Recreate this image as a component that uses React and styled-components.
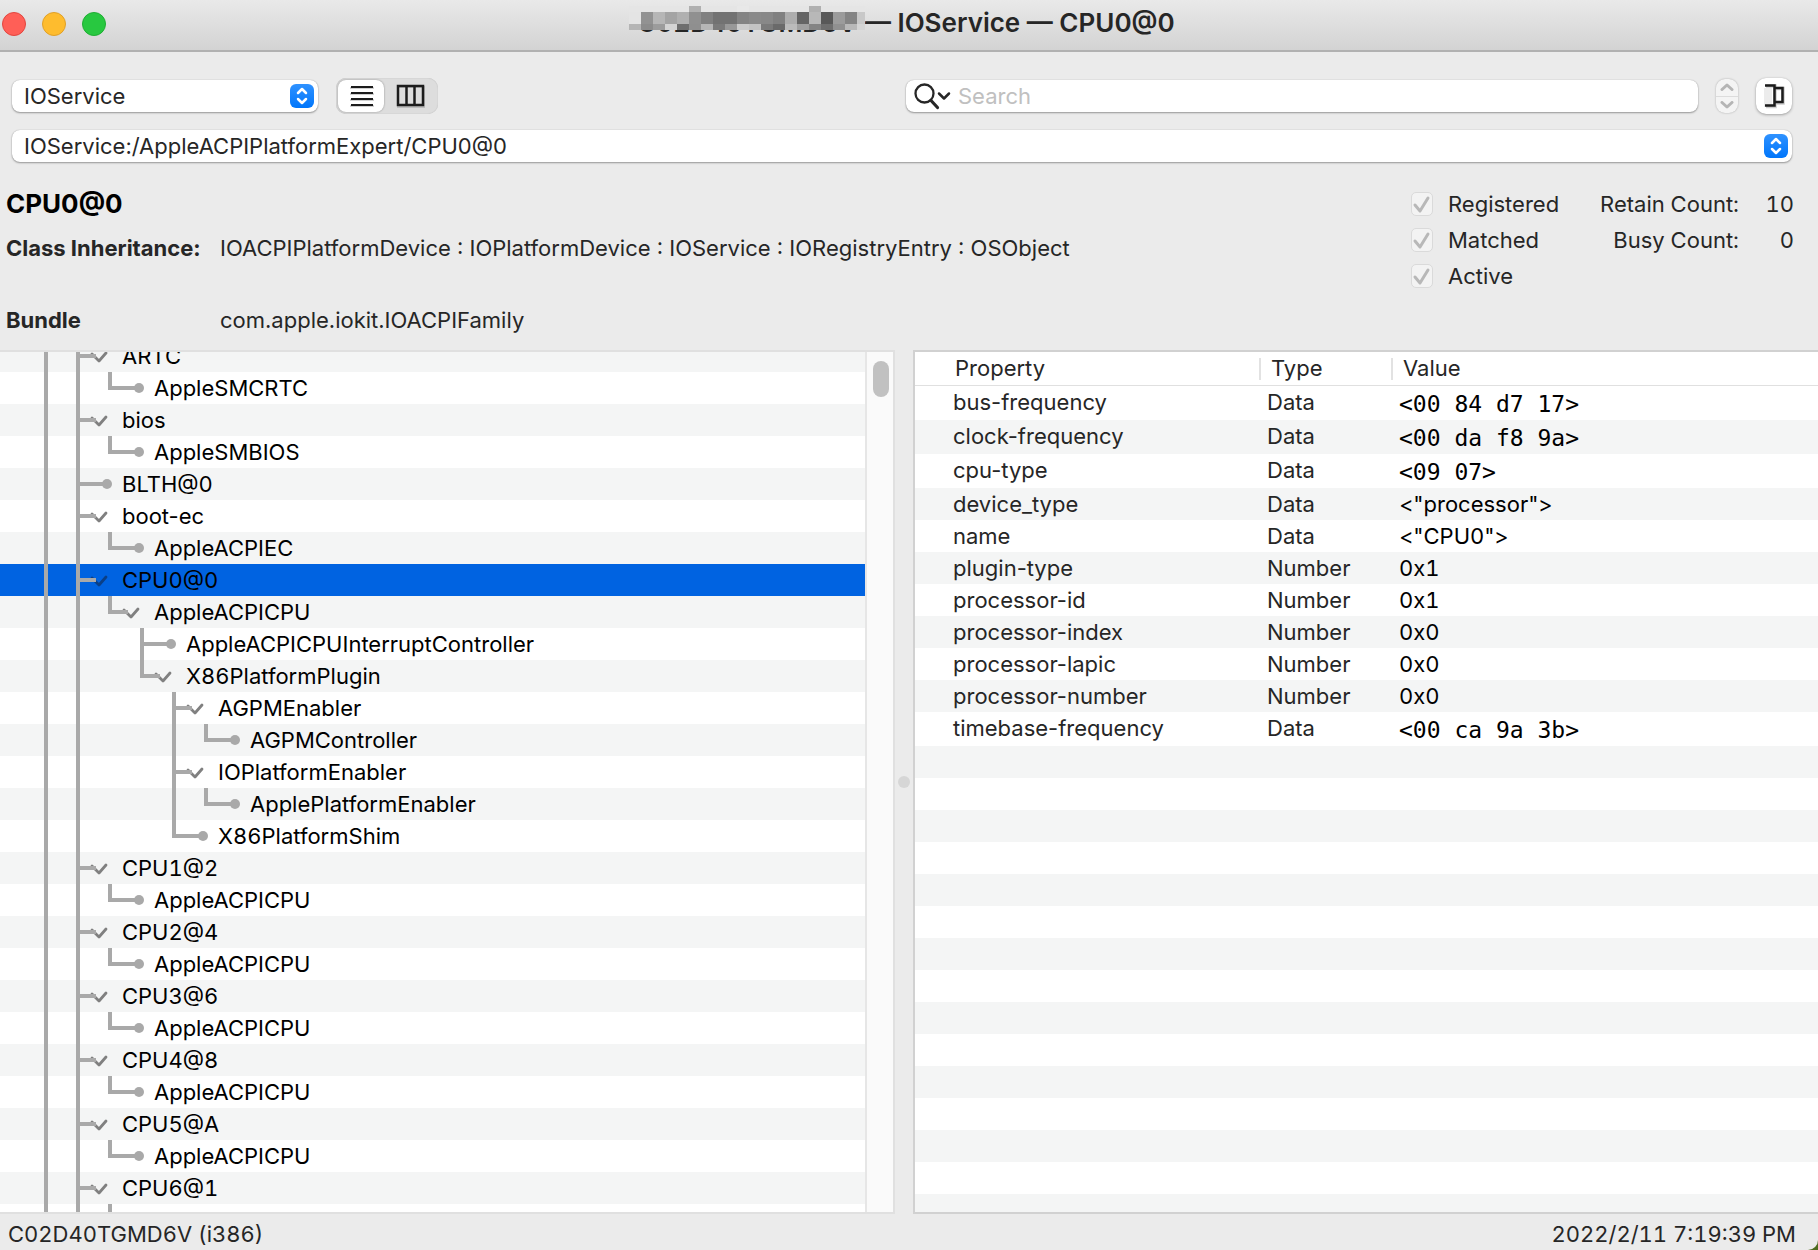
import React from "react";
import styled, { createGlobalStyle } from "styled-components";

const GlobalStyle = createGlobalStyle`
  *, *::before, *::after { box-sizing: border-box; }
  body { margin: 0; background: #4d6b1f; }
  button, input, select { font: inherit; color: inherit; margin: 0; }
`;

const Window = styled.div`
  height: 100vh;
  display: flex;
  flex-direction: column;
  overflow: hidden;
  border-bottom-right-radius: 10px;
  background: #ebebeb;
  color: #262626;
  font-family: Inter, "Liberation Sans", sans-serif;
  font-size: 22px;
  line-height: 32px;
`;

/* ---------- title bar ---------- */

const TitleBar = styled.header`
  flex: none;
  height: 52px;
  display: grid;
  grid-template-columns: 1fr auto 1fr;
  align-items: start;
  padding: 0 8px 0 2px;
  background: linear-gradient(#e9e9e9, #d3d3d3);
  border-bottom: 2px solid #b1b1b1;
`;

const Lights = styled.div`
  display: flex;
  gap: 16px;
  padding-top: 12px;
`;

const Light = styled.button`
  width: 24px;
  height: 24px;
  padding: 0;
  border: 1px solid ${(p) => p.$edge};
  border-radius: 50%;
  background: ${(p) => p.$fill};
`;

const Title = styled.div`
  display: flex;
  gap: 8px;
  font-size: 26px;
  font-weight: 600;
  line-height: 46px;
  white-space: nowrap;
`;

const Redacted = styled.span`
  position: relative;
  font-variant-numeric: tabular-nums;
`;

const Mosaic = styled.svg`
  position: absolute;
  top: 6px;
  right: -8px;
`;

/* ---------- toolbar ---------- */

const Toolbar = styled.div`
  flex: none;
  display: grid;
  grid-template-columns: minmax(0, 888fr) minmax(0, 792fr) auto;
  column-gap: 6px;
  align-items: center;
  padding: 26px 26px 0 12px;
`;

const ToolGroup = styled.div`
  display: flex;
  align-items: center;
  gap: 18px;
  padding-left: ${(p) => p.$inset || 0}px;
`;

const PathBar = styled.div`
  flex: none;
  padding: 16px 26px 0 12px;
`;

const PopUp = styled.div`
  position: relative;
  width: ${(p) => p.$width};
  height: 32px;
`;

const PopUpSelect = styled.select`
  display: block;
  width: 100%;
  height: 32px;
  padding: 0 40px 0 12px;
  appearance: none;
  border: 0;
  border-radius: 8px;
  background: #fff;
  line-height: 32px;
  box-shadow: 0 0 1px rgba(0, 0, 0, 0.3), 0 1px 2px rgba(0, 0, 0, 0.35);
`;

const Knob = styled.svg`
  position: absolute;
  top: 4px;
  right: 4px;
  pointer-events: none;
`;

const Segments = styled.div`
  display: flex;
  height: 36px;
  padding: 2px;
  border-radius: 10px;
  background: #dddddd;
  box-shadow: inset 0 0 1px rgba(0, 0, 0, 0.25);
`;

const Segment = styled.button`
  display: grid;
  place-items: center;
  width: ${(p) => (p.$on ? 46 : 52)}px;
  height: 32px;
  padding: 0;
  border: 0;
  border-radius: 8px;
  background: ${(p) => (p.$on ? "#fff" : "transparent")};
  box-shadow: ${(p) => (p.$on ? "0 0 2px rgba(0, 0, 0, 0.4)" : "none")};
`;

const SearchField = styled.label`
  display: flex;
  align-items: center;
  gap: 6px;
  height: 32px;
  padding: 0 8px;
  border-radius: 8px;
  background: #fff;
  box-shadow: 0 0 1px rgba(0, 0, 0, 0.3), 0 1px 2px rgba(0, 0, 0, 0.35);
`;

const SearchInput = styled.input`
  flex: 1;
  min-width: 0;
  height: 32px;
  padding: 0;
  border: 0;
  outline: 0;
  background: transparent;
  &::placeholder { color: #c0c0c0; opacity: 1; }
`;

const Stepper = styled.div`
  display: flex;
  flex-direction: column;
  width: 22px;
  height: 34px;
  border-radius: 9px;
  background: #f4f4f4;
  box-shadow: 0 0 2px rgba(0, 0, 0, 0.3);
`;

const StepButton = styled.button`
  flex: 1;
  display: grid;
  place-items: center;
  padding: 0;
  border: 0;
  background: transparent;
  & + & { border-top: 1px solid #dcdcdc; }
`;

const DrawerButton = styled.button`
  display: grid;
  place-items: center;
  width: 36px;
  height: 36px;
  padding: 0;
  border: 0;
  border-radius: 10px;
  background: #fff;
  box-shadow: 0 0 1px rgba(0, 0, 0, 0.2), 0 1px 3px rgba(0, 0, 0, 0.3);
`;

/* ---------- selected entry ---------- */

const Info = styled.section`
  flex: none;
  display: flex;
  justify-content: space-between;
  padding: 24px 24px 12px 6px;
  line-height: 36px;
`;

const Heading = styled.h1`
  margin: 0 0 8px;
  color: #000;
  font-size: 26px;
  font-weight: 700;
  line-height: 36px;
`;

const Facts = styled.dl`
  display: grid;
  grid-template-columns: 214px auto;
  row-gap: 36px;
  margin: 0;
  dt { font-weight: 700; white-space: nowrap; }
  dd { margin: 0; }
`;

const Status = styled.div`
  display: grid;
  grid-template-columns: 176px 152px 55px;
  grid-auto-rows: 36px;
`;

const Check = styled.label`
  grid-column: 1;
  display: grid;
  grid-template-columns: 22px auto;
  column-gap: 15px;
  align-items: center;
`;

const CheckBox = styled.input`
  grid-area: 1 / 1;
  width: 22px;
  height: 24px;
  appearance: none;
  border: 1px solid #dadada;
  border-radius: 5px;
  background: #f3f3f3;
`;

const Tick = styled.svg`
  grid-area: 1 / 1;
`;

const Count = styled.span`
  text-align: right;
  font-variant-numeric: tabular-nums;
`;

/* ---------- split view ---------- */

const Split = styled.main`
  flex: 1;
  min-height: 0;
  display: grid;
  grid-template-columns: minmax(0, 895fr) 18px minmax(0, 905fr);
`;

const TreePane = styled.section`
  display: flex;
  min-height: 0;
  border: solid #e0e0e0;
  border-width: 2px 2px 2px 0;
`;

const TreeView = styled.div`
  flex: 1;
  overflow: hidden;
  background: #fff;
`;

const TreeList = styled.ul`
  margin: -12px 0 0;
  padding: 0;
  list-style: none;
`;

const TreeRow = styled.li`
  display: flex;
  height: 32px;
  color: #000;
  font-variant-numeric: ${(p) => (p.$numbered ? "tabular-nums" : "normal")};
  white-space: nowrap;
  background: ${(p) => (p.$selected ? "#0063e1" : "#fff")};
  &:nth-child(odd) { background: ${(p) => (p.$selected ? "#0063e1" : "#f4f5f5")}; }
`;

const ScrollTrack = styled.div`
  flex: none;
  width: 28px;
  padding: 9px 4px 0 6px;
  border-left: 2px solid #e6e6e6;
  background: #fafafa;
`;

const ScrollThumb = styled.div`
  width: 16px;
  height: 36px;
  border-radius: 8px;
  background: #c1c1c1;
`;

const Divider = styled.div`
  display: grid;
  place-items: center;
`;

const Grip = styled.div`
  width: 12px;
  height: 12px;
  border-radius: 50%;
  background: #d6d6d6;
`;

const PropertyPane = styled.section`
  display: flex;
  flex-direction: column;
  min-height: 0;
  overflow: hidden;
  border: solid #d1d1d1;
  border-width: 2px 0 2px 2px;
  background: #fff;
`;

const PropertyTable = styled.table`
  flex: none;
  width: 100%;
  table-layout: fixed;
  border-collapse: separate;
  border-spacing: 0;
  th, td { padding: 0; text-align: left; vertical-align: top; font-weight: 400; }
  th { height: 34px; border-bottom: 1px solid #e0e0e0; vertical-align: middle; }
  td { padding-left: 8px; }
  td:first-child { padding-left: 38px; }
  tbody tr:nth-child(even) { background: #f4f5f5; }
`;

const ColumnLabel = styled.div`
  height: 22px;
  padding-left: ${(p) => (p.$first ? 40 : 10)}px;
  border-left: ${(p) => (p.$first ? "0" : "2px solid #e2e2e2")};
  line-height: 20px;
`;

const Col = styled.col`
  width: ${(p) => p.$width};
`;

const Value = styled.div`
  color: #000;
  font-variant-numeric: tabular-nums;
  ${(p) => p.$hex && `
    padding-top: 2px;
    font-family: "DejaVu Sans Mono", monospace;
    font-size: 23px;
    line-height: 32px;
  `}
`;

const EmptyRows = styled.div`
  flex: 1;
  background: repeating-linear-gradient(#f4f5f5 0 32px, #fff 32px 64px);
`;

const Footer = styled.footer`
  flex: none;
  display: flex;
  justify-content: space-between;
  height: 36px;
  padding: 4px 22px 0 8px;
  font-variant-numeric: tabular-nums;
`;

/* ---------- data ---------- */

const leaf = (name, level, extra) => ({ name, level, leaf: true, last: level > 0, ...extra });
const node = (name, level, extra) => ({ name, level, last: level > 0, ...extra });

const tree = [
  node("ARTC", 0),
  leaf("AppleSMCRTC", 1),
  node("bios", 0),
  leaf("AppleSMBIOS", 1),
  leaf("BLTH@0", 0),
  node("boot-ec", 0),
  leaf("AppleACPIEC", 1),
  node("CPU0@0", 0, { selected: true }),
  node("AppleACPICPU", 1),
  leaf("AppleACPICPUInterruptController", 2, { last: false }),
  node("X86PlatformPlugin", 2),
  node("AGPMEnabler", 3, { last: false }),
  leaf("AGPMController", 4, { guides: [3] }),
  node("IOPlatformEnabler", 3, { last: false }),
  leaf("ApplePlatformEnabler", 4, { guides: [3] }),
  leaf("X86PlatformShim", 3),
  node("CPU1@2", 0),
  leaf("AppleACPICPU", 1),
  node("CPU2@4", 0),
  leaf("AppleACPICPU", 1),
  node("CPU3@6", 0),
  leaf("AppleACPICPU", 1),
  node("CPU4@8", 0),
  leaf("AppleACPICPU", 1),
  node("CPU5@A", 0),
  leaf("AppleACPICPU", 1),
  node("CPU6@1", 0),
  leaf("AppleACPICPU", 1),
];

const properties = [
  ["bus-frequency", "Data", "<00 84 d7 17>", true],
  ["clock-frequency", "Data", "<00 da f8 9a>", true],
  ["cpu-type", "Data", "<09 07>", true],
  ["device_type", "Data", '<"processor">'],
  ["name", "Data", '<"CPU0">'],
  ["plugin-type", "Number", "0x1"],
  ["processor-id", "Number", "0x1"],
  ["processor-index", "Number", "0x0"],
  ["processor-lapic", "Number", "0x0"],
  ["processor-number", "Number", "0x0"],
  ["timebase-frequency", "Data", "<00 ca 9a 3b>", true],
];

/* Grey levels of the tiles hiding the host name, one list per band. */
const tiles = [
  { y: 0, h: 6, greys: [229, 229, 229, 229, 229, 176, 229, 229, 229, 232, 229, 229, 229, 229, 229, 176, 229, 229, 229, 229] },
  { y: 6, h: 12, greys: [228, 146, 182, 164, 176, 144, 128, 114, 114, 132, 138, 136, 128, 173, 100, 184, 88, 155, 132, 200] },
  { y: 18, h: 6, greys: [181, 140, 156, 212, 110, 143, 182, 122, 152, 204, 196, 122, 106, 187, 159, 132, 110, 144, 184, 212] },
];

/* ---------- drawings ---------- */

const UpDown = () => (
  <Knob width="24" height="24" viewBox="0 0 24 24" aria-hidden="true">
    <defs>
      <linearGradient id="knob" x1="0" y1="0" x2="0" y2="1">
        <stop offset="0" stopColor="#2f92ff" />
        <stop offset="1" stopColor="#0076fb" />
      </linearGradient>
    </defs>
    <rect width="24" height="24" rx="6" fill="url(#knob)" />
    <path d="M8 9l4-4 4 4M8 15l4 4 4-4" fill="none" stroke="#fff" strokeWidth="2.5" strokeLinecap="round" strokeLinejoin="round" />
  </Knob>
);

const Chevron = ({ up }) => (
  <svg width="14" height="8" viewBox="0 0 14 8" aria-hidden="true">
    <path d={up ? "M2 6.5l5-4.5 5 4.5" : "M2 1.5l5 4.5 5-4.5"} fill="none" stroke="#b5b5b5" strokeWidth="3" strokeLinecap="round" strokeLinejoin="round" />
  </svg>
);

const Branch = ({ row }) => {
  const x = 78 + 32 * row.level;
  const guides = [46, ...(row.level > 0 ? [78] : []), ...(row.guides || []).map((g) => 78 + 32 * g)];
  return (
    <svg width={x + 44} height="32" aria-hidden="true">
      {!row.leaf && (
        <path d={`M${x + 14} 14l7 7 7-8`} fill="none" stroke={row.selected ? "#0a3f86" : "#808080"} strokeWidth="2.800" strokeLinecap="round" strokeLinejoin="round" />
      )}
      <g stroke="#a9a9a9" strokeWidth="4" fill="none">
        {guides.map((g) => <path key={g} d={`M${g} 0V32`} />)}
        <path d={`M${x} 0V${row.last ? 18 : 32}M${x} 16H${x + (row.leaf ? 28 : 18)}`} />
      </g>
      {row.leaf && <circle cx={x + 29} cy="16" r="5" fill="#a9a9a9" />}
    </svg>
  );
};

export default function App() {
  return (
    <>
      <GlobalStyle />
      <Window>
        <TitleBar>
          <Lights>
            <Light aria-label="Close" $fill="#ff5f57" $edge="#e2463f" />
            <Light aria-label="Minimize" $fill="#febc2e" $edge="#e0a028" />
            <Light aria-label="Zoom" $fill="#28c840" $edge="#1fae33" />
          </Lights>
          <Title>
            <Redacted>
              C02D40TGMD6V
              <Mosaic width="236" height="24" shapeRendering="crispEdges" aria-hidden="true">
                {tiles.map((band) =>
                  band.greys.map((v, i) => (
                    <rect key={`${band.y}-${i}`} x={i * 12} y={band.y} width="12" height={band.h} fill={`rgb(${v},${v},${v})`} />
                  ))
                )}
              </Mosaic>
            </Redacted>
            <span>— IOService — CPU0@0</span>
          </Title>
        </TitleBar>

        <Toolbar>
          <ToolGroup>
            <PopUp $width="306px">
              <PopUpSelect aria-label="Plane" defaultValue="IOService">
                <option>IOService</option>
              </PopUpSelect>
              <UpDown />
            </PopUp>
            <Segments>
              <Segment $on aria-label="Outline view" aria-pressed="true">
                <svg width="28" height="24" viewBox="0 0 28 24" aria-hidden="true">
                  <path d="M3 4H27M3 10H27M3 16H27M3 22H27" stroke="#d0d0d0" strokeWidth="2" />
                  <path d="M4 3H26M4 9H26M4 15H26M4 21H26" stroke="#1c1c1c" strokeWidth="2" />
                </svg>
              </Segment>
              <Segment aria-label="Column view" aria-pressed="false">
                <svg width="30" height="24" viewBox="0 0 30 24" aria-hidden="true">
                  <rect x="3" y="3" width="26" height="20" fill="none" stroke="#bdbdbd" strokeWidth="2" />
                  <path d="M3 2H28V21H3ZM11.500 2V21M19.500 2V21" fill="none" stroke="#1c1c1c" strokeWidth="2.500" />
                </svg>
              </Segment>
            </Segments>
          </ToolGroup>
          <SearchField>
            <svg width="38" height="28" viewBox="0 0 38 28" fill="none" stroke="#262626" strokeLinecap="round" strokeLinejoin="round" aria-hidden="true">
              <circle cx="10.500" cy="11.500" r="9" strokeWidth="2.300" />
              <path d="M17 18.500L23.500 25.500" strokeWidth="3.200" />
              <path d="M25 11.500l5 5 5-5" strokeWidth="2.500" />
            </svg>
            <SearchInput type="search" placeholder="Search" aria-label="Search" />
          </SearchField>
          <ToolGroup $inset={12}>
            <Stepper>
              <StepButton aria-label="Previous match"><Chevron up /></StepButton>
              <StepButton aria-label="Next match"><Chevron /></StepButton>
            </Stepper>
            <DrawerButton aria-label="Toggle properties">
              <svg width="24" height="26" viewBox="0 0 24 26" fill="none" aria-hidden="true">
                <path d="M2 5H10V24H2Z" fill="#ececec" />
                <path d="M4 3H13V23.500H4M13 5.500H21V20H13" stroke="#9c9c9c" strokeWidth="3.500" opacity="0.500" />
                <path d="M3 2.500H12.500V22.500H3M12.500 5H20.500V19H12.500" stroke="#1c1c1c" strokeWidth="2.500" />
              </svg>
            </DrawerButton>
          </ToolGroup>
        </Toolbar>

        <PathBar>
          <PopUp $width="100%">
            <PopUpSelect aria-label="Registry path" defaultValue="IOService:/AppleACPIPlatformExpert/CPU0@0">
              <option>IOService:/AppleACPIPlatformExpert/CPU0@0</option>
            </PopUpSelect>
            <UpDown />
          </PopUp>
        </PathBar>

        <Info>
          <div>
            <Heading>CPU0@0</Heading>
            <Facts>
              <dt>Class Inheritance:</dt>
              <dd>IOACPIPlatformDevice : IOPlatformDevice : IOService : IORegistryEntry : OSObject</dd>
              <dt>Bundle</dt>
              <dd>com.apple.iokit.IOACPIFamily</dd>
            </Facts>
          </div>
          <Status>
            {[["Registered", "Retain Count:", "10"], ["Matched", "Busy Count:", "0"], ["Active"]].map(([flag, label, count]) => (
              <React.Fragment key={flag}>
                <Check>
                  <CheckBox type="checkbox" defaultChecked disabled />
                  <Tick width="22" height="24" viewBox="0 0 22 24" aria-hidden="true">
                    <path d="M4 13l5 6 8-13" fill="none" stroke="#b8b8b8" strokeWidth="3" strokeLinecap="round" strokeLinejoin="round" />
                  </Tick>
                  {flag}
                </Check>
                {label && <Count>{label}</Count>}
                {label && <Count>{count}</Count>}
              </React.Fragment>
            ))}
          </Status>
        </Info>

        <Split>
          <TreePane>
            <TreeView>
              <TreeList>
                {tree.map((row, i) => (
                  <TreeRow key={i} $selected={row.selected} $numbered={/\d/.test(row.name)}>
                    <Branch row={row} />
                    {row.name}
                  </TreeRow>
                ))}
              </TreeList>
            </TreeView>
            <ScrollTrack><ScrollThumb /></ScrollTrack>
          </TreePane>
          <Divider><Grip /></Divider>
          <PropertyPane>
            <PropertyTable>
              <colgroup>
                <Col $width="344px" />
                <Col $width="132px" />
                <Col $width="auto" />
              </colgroup>
              <thead>
                <tr>
                  <th scope="col"><ColumnLabel $first>Property</ColumnLabel></th>
                  <th scope="col"><ColumnLabel>Type</ColumnLabel></th>
                  <th scope="col"><ColumnLabel>Value</ColumnLabel></th>
                </tr>
              </thead>
              <tbody>
                {properties.map(([name, type, value, hex]) => (
                  <tr key={name}>
                    <td>{name}</td>
                    <td>{type}</td>
                    <td><Value $hex={hex}>{value}</Value></td>
                  </tr>
                ))}
              </tbody>
            </PropertyTable>
            <EmptyRows />
          </PropertyPane>
        </Split>

        <Footer>
          <span>C02D40TGMD6V (i386)</span>
          <span>2022/2/11 7:19:39 PM</span>
        </Footer>
      </Window>
    </>
  );
}
